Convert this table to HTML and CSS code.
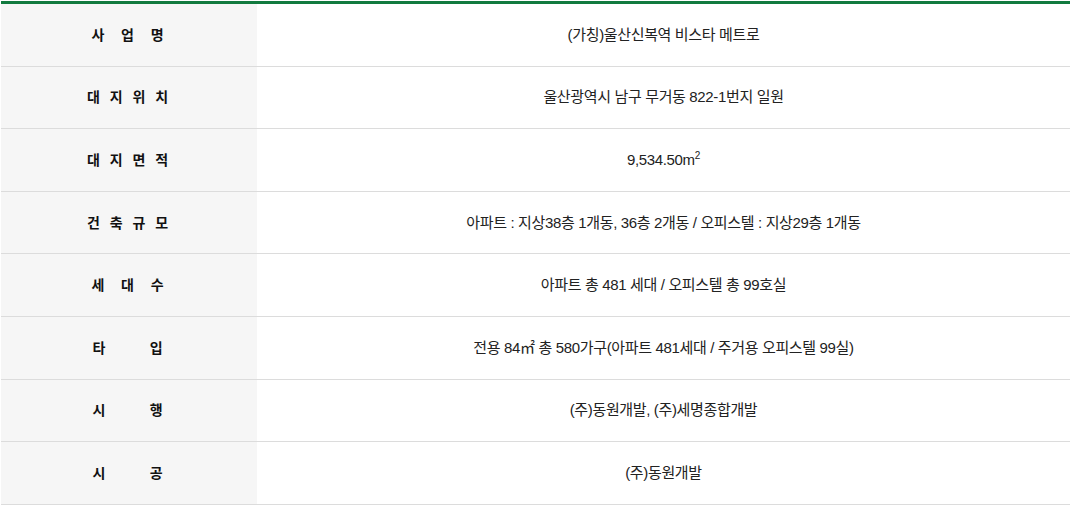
FILE: index.html
```html
<!DOCTYPE html>
<html lang="ko">
<head>
<meta charset="utf-8">
<link rel="stylesheet" href="styles.css">
</head>
<body>
<table class="info">
<tbody>
<tr><th>사&nbsp;&nbsp;업&nbsp;&nbsp;명</th><td>(가칭)울산신복역 비스타 메트로</td></tr>
<tr><th>대 지 위 치</th><td>울산광역시 남구 무거동 822-1번지 일원</td></tr>
<tr><th>대 지 면 적</th><td>9,534.50m<sup>2</sup></td></tr>
<tr><th>건 축 규 모</th><td>아파트 : 지상38층 1개동, 36층 2개동 / 오피스텔 : 지상29층 1개동</td></tr>
<tr><th>세&nbsp;&nbsp;대&nbsp;&nbsp;수</th><td>아파트 총 481 세대 / 오피스텔 총 99호실</td></tr>
<tr><th>타&nbsp;&nbsp;&nbsp;&nbsp;&nbsp;&nbsp;입</th><td>전용 84㎡ 총 580가구(아파트 481세대 / 주거용 오피스텔 99실)</td></tr>
<tr><th>시&nbsp;&nbsp;&nbsp;&nbsp;&nbsp;&nbsp;행</th><td>(주)동원개발, (주)세명종합개발</td></tr>
<tr><th>시&nbsp;&nbsp;&nbsp;&nbsp;&nbsp;&nbsp;공</th><td>(주)동원개발</td></tr>
</tbody>
</table>
</body>
</html>
```
FILE: styles.css
```css
html, body {
  margin: 0;
  padding: 0;
  background: #fff;
}
body {
  padding: 1px 1px 0 1px;
  font-family: "Liberation Sans", "Noto Sans CJK KR", sans-serif;
  color: #222;
}
.info {
  width: 100%;
  border-collapse: collapse;
  border-top: 3px solid #127a3f;
}
.info th,
.info td {
  height: 61.6px;
  padding: 0;
  border-bottom: 1px solid #dcdcdc;
  text-align: center;
  vertical-align: middle;
  font-size: 15px;
  line-height: 20px;
}
.info th {
  width: 256px;
  background: #f6f6f6;
  font-weight: 700;
  font-size: 14px;
  letter-spacing: 3px;
  color: #111;
}
.info td {
  font-weight: 400;
  letter-spacing: -0.35px;
}
.info sup {
  font-size: 10px;
  line-height: 0;
  vertical-align: 6px;
}
```
